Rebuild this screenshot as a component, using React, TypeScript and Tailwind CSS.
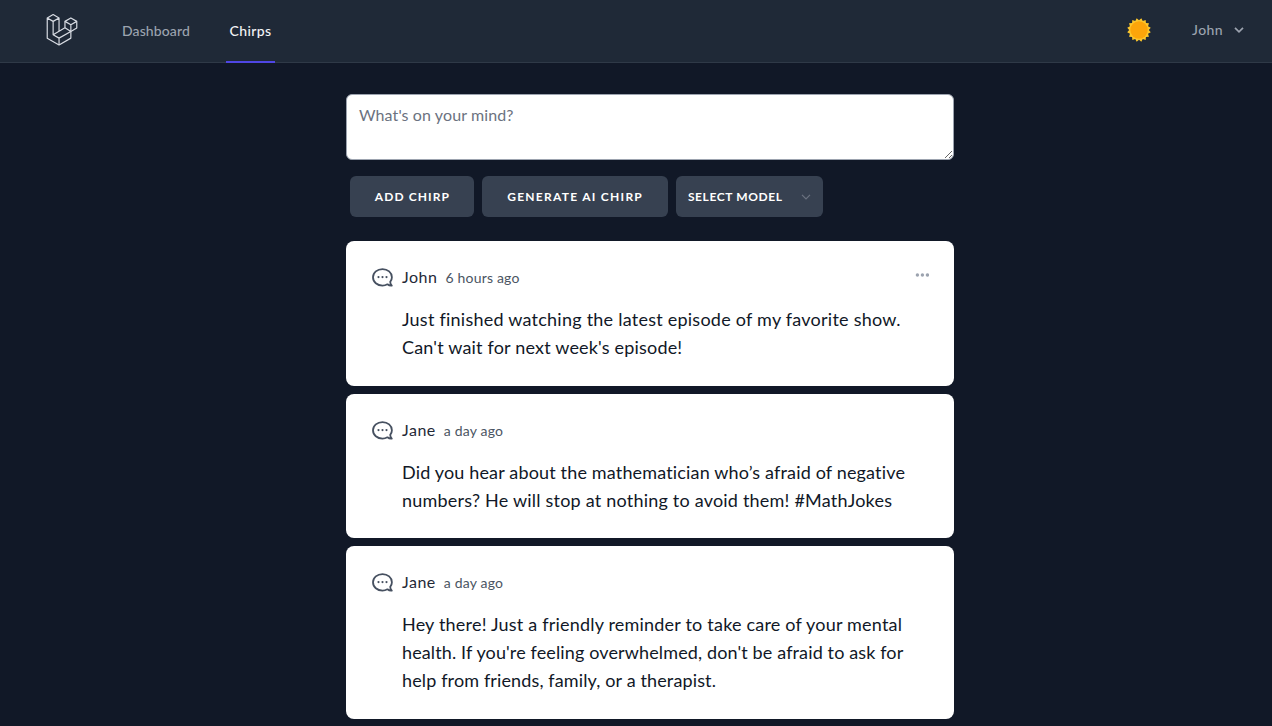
import React from "react";

type Line = { text: string; tracking: string };
type Chirp = { author: string; time: string; lines: Line[]; editable?: boolean };

const chirps: Chirp[] = [
  {
    author: "John",
    time: "6 hours ago",
    lines: [
      { text: "Just finished watching the latest episode of my favorite show.", tracking: "tracking-[0.24px]" },
      { text: "Can't wait for next week's episode!", tracking: "tracking-[0.18px]" },
    ],
    editable: true,
  },
  {
    author: "Jane",
    time: "a day ago",
    lines: [
      { text: "Did you hear about the mathematician who’s afraid of negative", tracking: "tracking-[0.16px]" },
      { text: "numbers? He will stop at nothing to avoid them! #MathJokes", tracking: "tracking-[0.21px]" },
    ],
  },
  {
    author: "Jane",
    time: "a day ago",
    lines: [
      { text: "Hey there! Just a friendly reminder to take care of your mental", tracking: "tracking-[0.2px]" },
      { text: "health. If you're feeling overwhelmed, don't be afraid to ask for", tracking: "tracking-[0.13px]" },
      { text: "help from friends, family, or a therapist.", tracking: "tracking-[0.13px]" },
    ],
  },
];

function Logo() {
  return (
    <svg viewBox="0 0 62 65" className="h-8 w-8 shrink-0" fill="none" stroke="#d8dce3" strokeWidth="2.4" strokeLinejoin="round">
      <path d="M1 8.1V49.1L25 63L49 49V35.5L61 28.5V15L49 8L37 15V28L25 35V8.1L13 1.2L1 8.1L13 15L25 8.1" />
      <path d="M13 15V42L25 49L49 35.5L37 28M13 42L25 35M25 49V63M37 15L49 22L61 15M49 22V35.5" />
    </svg>
  );
}

const rays = Array.from({ length: 32 }, (_, i) => {
  const angle = (i * Math.PI) / 16 + Math.PI / 16;
  const radius = i % 2 === 0 ? 12 : 9.8;
  return `${(12 + radius * Math.sin(angle)).toFixed(2)},${(12 - radius * Math.cos(angle)).toFixed(2)}`;
}).join(" ");

function Sun() {
  return (
    <svg viewBox="0 0 24 24" className="h-6 w-6">
      <polygon points={rays} fill="#fcc62b" />
      <circle cx="12" cy="12" r="8.7" fill="#fca50a" />
    </svg>
  );
}

function Bubble() {
  return (
    <svg viewBox="-0.5 -0.6 22 20" className="h-5 w-[22px] shrink-0" fill="none" stroke="#465060" strokeWidth="1.8" strokeLinejoin="round">
      <path d="M18.7 14.2C19.9 12.9 20.4 11.2 20.4 9.7C20.4 4.9 16.2 1.5 11 1.5C5.8 1.5 1.5 4.9 1.5 9.7C1.5 14.5 5.8 18 11 18C12.8 18 14.5 17.5 15.9 16.7C17.2 17.7 18.7 18.2 20.3 18C19.3 17 18.7 15.7 18.7 14.2Z" />
      <g fill="#465060" stroke="none">
        <circle cx="7" cy="9.5" r="1.1" />
        <circle cx="11" cy="9.5" r="1.1" />
        <circle cx="15" cy="9.5" r="1.1" />
      </g>
    </svg>
  );
}

function ChirpCard({ author, time, lines, editable }: Chirp) {
  return (
    <article className="flex rounded-lg bg-white px-[25px] pt-6 pb-[24.5px]">
      <div className="pt-[2px]">
        <Bubble />
      </div>
      <div className="ml-[8.6px] flex-1">
        <div className="flex justify-between">
          <div className="flex h-6 items-baseline">
            <span className="text-base leading-[23px] tracking-[0.5px] text-[#1f2937]">{author}</span>
            <span className="ml-2 text-sm leading-5 tracking-[0.2px] text-[#4b5563]">{time}</span>
          </div>
          {editable && (
            <svg viewBox="-0.4 0 14 4" className="mt-2 h-1 w-3.5" fill="#9ca3af">
              <circle cx="2" cy="2" r="1.7" />
              <circle cx="7" cy="2" r="1.7" />
              <circle cx="12" cy="2" r="1.7" />
            </svg>
          )}
        </div>
        <p className="mt-4 text-lg leading-7 whitespace-nowrap text-[#111827]">
          {lines.map(({ text, tracking }) => (
            <span key={text} className={`block ${tracking}`}>
              {text}
            </span>
          ))}
        </p>
      </div>
    </article>
  );
}

export default function App() {
  return (
    <div className="h-[726px] overflow-hidden bg-[#111827] font-['Lato',sans-serif]">
      <nav className="flex h-[63px] items-start border-b border-[#2f3947] bg-[#1f2937] pr-7 pl-[46px]">
        <div className="pt-3.5">
          <Logo />
        </div>
        <a className="ml-11 text-sm leading-[62px] font-medium tracking-[0.1px] text-[#9ca3af]">Dashboard</a>
        <a className="ml-[35.7px] h-[63px] border-b-2 border-[#4f46e5] px-1 text-sm leading-[62px] font-medium tracking-[0.35px] text-[#f3f4f6]">Chirps</a>
        <div className="ml-auto flex h-[59px] items-center">
          <Sun />
          <span className="ml-[41px] text-sm font-medium tracking-[0.4px] text-[#9ca3af]">John</span>
          <svg viewBox="0 0 10 6" className="ml-[11px] h-1.5 w-2.5" fill="none" stroke="#9ca3af" strokeWidth="1.7">
            <path d="M1 0.8L5 4.8L9 0.8" />
          </svg>
        </div>
      </nav>
      <main className="ml-[346.4px] w-[608px] pt-[31.3px]">
        <textarea
          placeholder="What's on your mind?"
          className="block h-[66px] w-full rounded-md border border-[#9ca3af] bg-white px-[11.6px] py-2 text-base tracking-[0.1px] text-[#111827] placeholder:text-[#6b7280]"
        />
        <div className="mt-4 flex gap-2 pl-1 text-xs font-bold text-white">
          <button className="h-[41px] w-[124px] rounded-md bg-[#374151] tracking-[1.1px]">ADD CHIRP</button>
          <button className="h-[41px] w-[185.5px] rounded-md bg-[#374151] tracking-[1.27px]">GENERATE AI CHIRP</button>
          <button className="flex h-[41px] w-[147px] items-center justify-between rounded-md bg-[#374151] px-3">
            <span className="tracking-[0.6px]">SELECT MODEL</span>
            <svg viewBox="0 0 10 6" className="h-1.5 w-2.5" fill="none" stroke="#6b7280" strokeWidth="1.2">
              <path d="M1 0.8L5 4.8L9 0.8" />
            </svg>
          </button>
        </div>
        <section className="mt-6 flex flex-col gap-2">
          {chirps.map((chirp, i) => (
            <ChirpCard key={i} {...chirp} />
          ))}
        </section>
      </main>
    </div>
  );
}
